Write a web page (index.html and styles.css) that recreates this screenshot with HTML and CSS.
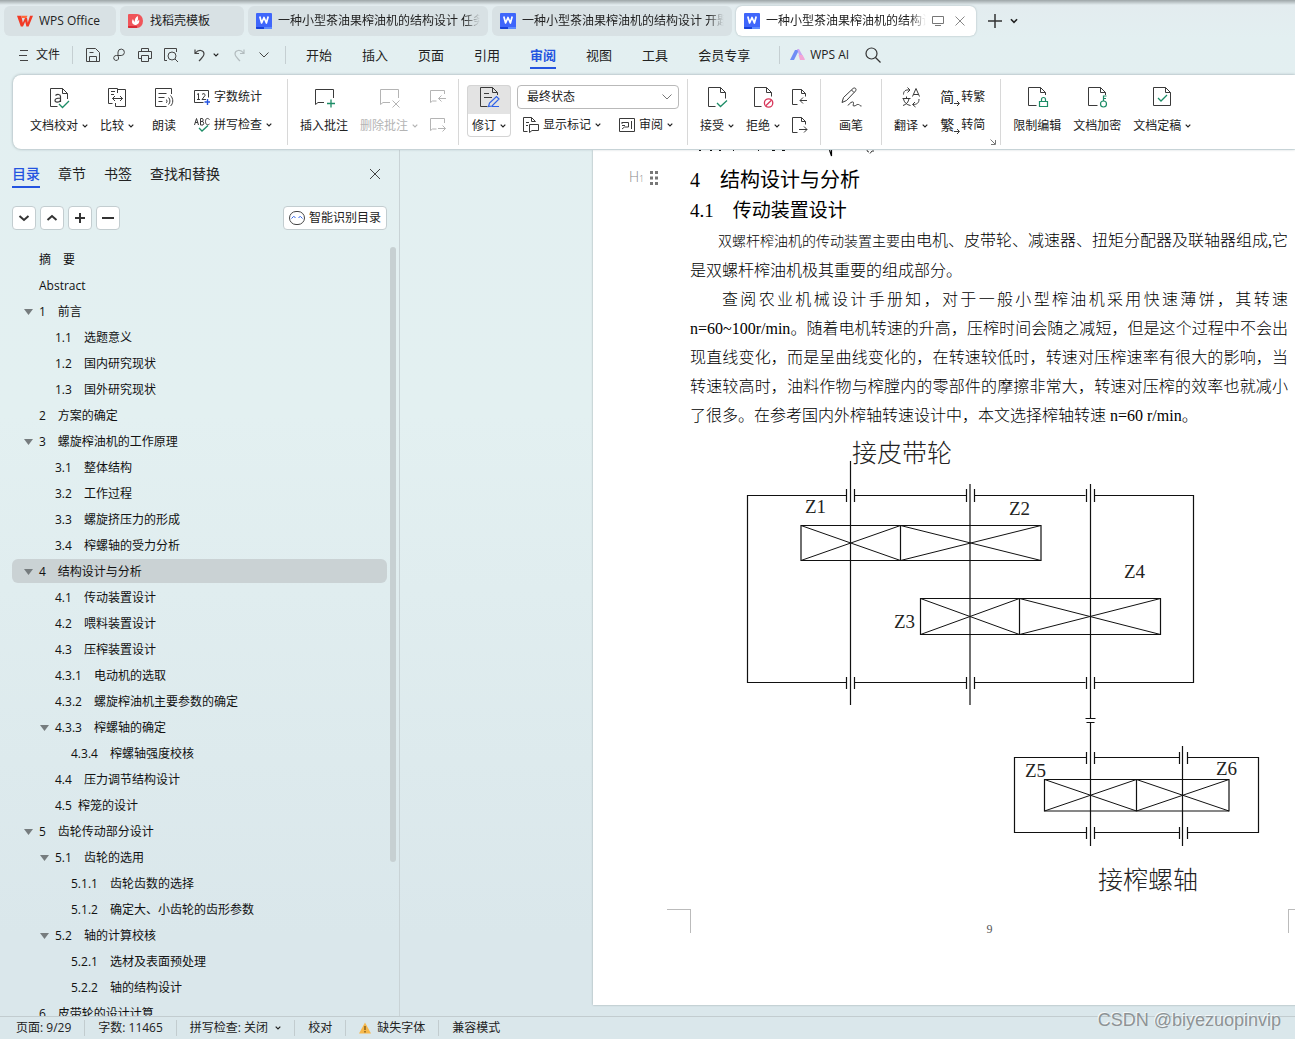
FILE: index.html
```html
<!DOCTYPE html>
<html lang="zh-CN">
<head>
<meta charset="utf-8">
<meta name="viewport" content="width=device-width, initial-scale=1">
<title>WPS Office</title>
<link rel="stylesheet" href="styles.css">
</head>
<body>
<svg class="defs" width="0" height="0" aria-hidden="true">
  <symbol id="chev" viewBox="0 0 6 6"><path d="M.7 1.7 3 4 5.3 1.7" fill="none" stroke="currentColor" stroke-width="1.2"/></symbol>
  <symbol id="word" viewBox="0 0 16 16"><path d="M1 0h14a1 1 0 0 1 1 1v14a1 1 0 0 1-1 1H1a1 1 0 0 1-1-1V1a1 1 0 0 1 1-1z" fill="#3f66fb"/><path d="M0 14h8v2H1a1 1 0 0 1-1-1z" fill="#1741d8"/><path d="M8 14h8v1a1 1 0 0 1-1 1H8z" fill="#5e8bff"/><path d="M3.8 3.5 5.6 10 8 4.5l2.4 5.500L12.200 3.500" fill="none" stroke="#fff" stroke-width="1.7" stroke-linejoin="round"/></symbol>
</svg>

<div class="app">
  <header class="tabs">
    <button class="tab tab-home" type="button">
      <svg width="16" height="12" viewBox="0 0 16 12"><path d="M0 .8h4.300l1.500 7L8 3h2l.8 4.800L13 .8h3L11.600 11.500H9.400L8.200 6.500 6 11.500H3.800z" fill="#f23a26"/><path d="M4.300.8h6.200l-1 2.200H5z" fill="#ff6a3c"/></svg>
      <span class="tab-text">WPS Office</span>
    </button>
    <button class="tab tab-tpl" type="button">
      <svg width="16" height="16" viewBox="0 0 16 16"><path d="M1 1h8a6 7 0 0 1 0 14H1a1 1 0 0 1-1-1V2a1 1 0 0 1 1-1z" fill="#f0555a"/><path d="M0 13h9v2H1a1 1 0 0 1-1-1z" fill="#d92b35"/><path d="M7 12C3.500 11 3.500 8 5 6c.5 2 1.500 2 1.800 3.500C6.500 6.500 7.500 4 10 3c-.5 2 1 2.500-1 5.500C10 8 10.500 7.500 11 6.500 12 9.500 10 12 7 12z" fill="#fff"/></svg>
      <span class="tab-text">找稻壳模板</span>
    </button>
    <button class="tab tab-doc" type="button"><svg width="16" height="16"><use href="#word"/></svg><span class="tab-text fade">一种小型茶油果榨油机的结构设计 任务书</span></button>
    <button class="tab tab-doc" type="button"><svg width="16" height="16"><use href="#word"/></svg><span class="tab-text fade">一种小型茶油果榨油机的结构设计 开题报告</span></button>
    <div class="tab tab-doc active">
      <svg width="16" height="16"><use href="#word"/></svg><span class="tab-text fade">一种小型茶油果榨油机的结构设计</span>
      <svg width="12" height="12" viewBox="0 0 12 12" fill="none" stroke="#777"><path d="M.5 1.500h11v7H.5zM3 10.500h6"/></svg>
      <button class="plain close" type="button" aria-label="关闭标签"><svg width="10" height="10" viewBox="0 0 10 10" fill="none" stroke="#888"><path d="m.5.5 9 9m0-9-9 9"/></svg></button>
    </div>
    <div class="tab-tools">
      <button class="plain" type="button" aria-label="新建"><svg width="14" height="14" viewBox="0 0 14 14" stroke="#333" stroke-width="1.500"><path d="M7 0v14M0 7h14"/></svg></button>
      <button class="plain" type="button" aria-label="标签列表"><svg width="8" height="8"><use href="#chev"/></svg></button>
    </div>
  </header>

  <nav class="menu" aria-label="菜单">
    <button class="plain file" type="button"><svg width="10" height="12" viewBox="0 0 10 12" stroke="#444"><path d="M1 1.500h8M0 6.500h8M1 11.500h8"/></svg>文件</button>
    <span class="bar"></span>
    <div class="quick">
      <button class="plain" type="button" aria-label="保存"><svg width="16" height="16" viewBox="0 0 16 16" fill="none" stroke="#444"><path d="M1.500 1.500h9l4 4v9h-13zM4.500 14v-4.500h7V14M4.500 5.500h4"/></svg></button>
      <button class="plain" type="button" aria-label="输出为PDF"><svg width="16" height="16" viewBox="0 0 16 16" fill="none" stroke="#444"><path d="M7 9.500V5a3.200 3.200 0 1 1 3.200 3.500H5.500A2.500 2.500 0 1 0 7.500 12V9.500"/></svg></button>
      <button class="plain" type="button" aria-label="打印"><svg width="16" height="16" viewBox="0 0 16 16" fill="none" stroke="#444"><path d="M4.500 4.500v-3h7v3M4 11.500H1.500v-7h13v7H12M4.500 8.500h7v6h-7z"/></svg></button>
      <button class="plain" type="button" aria-label="打印预览"><svg width="16" height="16" viewBox="0 0 16 16" fill="none" stroke="#444"><path d="M4 13.500H1.500v-12h12V5"/><circle cx="9" cy="9" r="4"/><path d="m12 12 3 3"/></svg></button>
      <button class="plain undo" type="button" aria-label="撤销"><svg width="14" height="14" viewBox="0 0 14 14" fill="none" stroke="#444" stroke-width="1.200"><path d="M2 1.500v4h4M2.500 5C5.500 1 11 2 11 6c0 2.500-2 3.500-5 7"/></svg><svg width="6" height="6"><use href="#chev"/></svg></button>
      <button class="plain" type="button" aria-label="恢复"><svg width="14" height="14" viewBox="0 0 14 14" fill="none" stroke="#b3bcbf" stroke-width="1.200"><path d="M12 1.500v4H8M11.500 5C8.500 1 3 2 3 6c0 2.500 2 3.500 5 7"/></svg></button>
      <button class="plain" type="button" aria-label="更多"><svg width="10" height="6" viewBox="0 0 10 6" fill="none" stroke="#444"><path d="m.5.5 4.500 4.500L9.500.5"/></svg></button>
    </div>
    <span class="bar"></span>
    <div class="menu-items">
      <a href="#start">开始</a><a href="#insert">插入</a><a href="#page">页面</a><a href="#ref">引用</a><a href="#review" class="on" aria-current="page">审阅</a><a href="#view">视图</a><a href="#tools">工具</a><a href="#member">会员专享</a>
    </div>
    <span class="bar"></span>
    <button class="plain ai" type="button"><svg width="16" height="12" viewBox="0 0 16 12"><path d="M5 1h4L4 11H0z" fill="#6f8df5"/><path d="M7 0h2l5.500 10h-4z" fill="#c9a5f0"/><path d="m8.500 6 4 0 2.500 5h-5z" fill="#f3a6d6"/></svg>WPS AI</button>
    <button class="plain" type="button" aria-label="搜索"><svg width="16" height="16" viewBox="0 0 16 16" fill="none" stroke="#333" stroke-width="1.200"><circle cx="6.500" cy="6.500" r="5.500"/><path d="m10.500 10.500 5 5"/></svg></button>
  </nav>

  <section class="ribbon" aria-label="审阅">
    <div class="group roomy">
      <button class="tall" type="button"><span class="ico"><svg width="24" height="24" viewBox="0 0 24 24" fill="none"><path d="M10.500 21.500h-7v-18h12l5 5V14M15.500 3.500v5h5" stroke="#3a3a3a"/><path d="M8.500 10.500c1.500-1.500 5-1.500 5 1v5.500M13.500 13c-3 0-5.500.5-5.500 2.500s4 2.300 5.500 0" stroke="#3a3a3a" stroke-width="1.200"/><path d="m12 19 3.500 3.500L22 16" stroke="#1c8c66" stroke-width="1.300"/></svg></span><span class="lab">文档校对<svg class="dd"><use href="#chev"/></svg></span></button>
      <button class="tall" type="button"><span class="ico"><svg width="24" height="24" viewBox="0 0 24 24" fill="none" stroke="#3a3a3a"><path d="M12.500 8V3.500h-9v15h4M12.500 4.500h8v17h-10V18M6 6.500h4M6 9.500h3M7.500 13.500h10M10 11l-2.500 2.500L10 16M15 11l2.500 2.500L15 16"/></svg></span><span class="lab">比较<svg class="dd"><use href="#chev"/></svg></span></button>
      <button class="tall solo" type="button"><span class="ico"><svg width="24" height="24" viewBox="0 0 24 24" fill="none" stroke="#3a3a3a"><path d="M19.500 9V3.500h-16v18h11M6.500 8.500h8M6.500 12.500h6M6.500 16.500h4M14 14.500a2 2 0 0 1 0 3.500M16.500 12.500a5 5 0 0 1 0 7M18.500 10.500c3 3 3 8 0 10.500"/></svg></span><span class="lab">朗读</span></button>
      <div class="rows">
        <button class="row" type="button"><svg width="16" height="16" viewBox="0 0 16 16" fill="none"><path d="M9.500 13.500h-9v-12h14v7" stroke="#3a3a3a"/><path d="M3 5.500 4.500 4.500v6M3 10.500h3M8 5.500c1-1.500 3.500-1 3 1L8 10.500h4" stroke="#3a3a3a"/><path d="M13.500 10v6M10.500 13h6" stroke="#2454e0" stroke-width="1.400"/></svg>字数统计</button>
        <button class="row" type="button"><svg width="16" height="16" viewBox="0 0 16 16" fill="none" stroke="#3a3a3a"><path d="m.5 8 2-6.500 2 6.500M1 5.500h3M6.500 8V1.500h2q1.500 1.500 0 3h-2 2.500q1.500 2 0 3.500zM15.500 2.500c-3-2.500-4 0-4 2s1 4.500 4 2.500"/><path d="m5 11 3 3 6-5.500" stroke="#1c8c66" stroke-width="1.300"/></svg>拼写检查<svg class="dd"><use href="#chev"/></svg></button>
      </div>
    </div>

    <div class="group">
      <button class="tall" type="button"><span class="ico"><svg width="24" height="24" viewBox="0 0 24 24" fill="none"><path d="M21.500 13V4.500h-18v15L6 17.500h6" stroke="#3a3a3a"/><path d="M19 14.500v8M15 18.500h8" stroke="#1c8c66" stroke-width="1.300"/></svg></span><span class="lab">插入批注</span></button>
      <button class="tall" type="button" disabled><span class="ico"><svg width="24" height="24" viewBox="0 0 24 24" fill="none" stroke="#b4b4b4"><path d="M21.500 13V4.500h-18v15L6 17.500h7M15.500 15.500l7 7m0-7-7 7"/></svg></span><span class="lab">删除批注<svg class="dd"><use href="#chev"/></svg></span></button>
      <div class="rows">
        <button class="row" type="button" disabled aria-label="上一条批注"><svg width="16" height="16" viewBox="0 0 16 16" fill="none" stroke="#b4b4b4"><path d="M14.500 5V1.500H.5v12l2-1.500h4M16 9.500H8.500M11.500 6.500l-3 3 3 3"/></svg></button>
        <button class="row" type="button" disabled aria-label="下一条批注"><svg width="16" height="16" viewBox="0 0 16 16" fill="none" stroke="#b4b4b4"><path d="M14.500 6V1.500H.5v12l2-1.500h4M8 11.500h7.500M12.500 8.500l3 3-3 3"/></svg></button>
      </div>
    </div>

    <div class="group tight">
      <button class="tall pressed" type="button" aria-pressed="true"><span class="ico"><svg width="24" height="24" viewBox="0 0 24 24" fill="none"><path d="M10.500 21.500h-7v-19h12l5 5V10M15.500 2.500v5h5M7 8.500h5M7 12.500h8" stroke="#3a3a3a"/><path d="m11.500 21.500 1-3.500 7-6.500 2.500 2.500-7 7zM15 21.500h7" stroke="#2f62e8" stroke-width="1.200"/></svg></span><span class="lab">修订<svg class="dd"><use href="#chev"/></svg></span></button>
      <div class="rows">
        <label class="pick"><select aria-label="显示状态"><option>最终状态</option></select><svg width="10" height="6" viewBox="0 0 10 6" fill="none" stroke="#777"><path d="m.5.5 4.500 4.500L9.500.5"/></svg></label>
        <div class="pair">
          <button class="row" type="button"><svg width="16" height="16" viewBox="0 0 16 16" fill="none" stroke="#3a3a3a"><path d="M4.500 14.500h-4V.5h8l4 4M8.500.5v4h4M3 5.500h3M3 8.500h2M6.500 15.500v-8h9v6H9z"/></svg>显示标记<svg class="dd"><use href="#chev"/></svg></button>
          <button class="row" type="button"><svg width="16" height="16" viewBox="0 0 16 16" fill="none" stroke="#3a3a3a"><path d="M.5 1.500h15v13H.5zM12.500 4v8M3 5.500h6.500v4.500H5.500L3 12M3 5v2M3 8.500h3"/></svg>审阅<svg class="dd"><use href="#chev"/></svg></button>
        </div>
      </div>
    </div>

    <div class="group">
      <button class="tall" type="button"><span class="ico"><svg width="24" height="24" viewBox="0 0 24 24" fill="none"><path d="M10.500 21.500h-7v-19h12l5 5v6M15.500 2.500v5h5" stroke="#3a3a3a"/><path d="m12 18 3.500 3.500 6.500-6" stroke="#1c8c66" stroke-width="1.300"/></svg></span><span class="lab">接受<svg class="dd"><use href="#chev"/></svg></span></button>
      <button class="tall" type="button"><span class="ico"><svg width="24" height="24" viewBox="0 0 24 24" fill="none"><path d="M10.500 21.500h-7v-19h12l5 5v4M15.500 2.500v5h5" stroke="#3a3a3a"/><path d="M14.800 20.800l5.600-5.600" stroke="#d8365a" stroke-width="1.300"/><circle cx="17.600" cy="18" r="4.200" stroke="#d8365a" stroke-width="1.300"/></svg></span><span class="lab">拒绝<svg class="dd"><use href="#chev"/></svg></span></button>
      <div class="rows">
        <button class="row" type="button" aria-label="上一条修订"><svg width="16" height="16" viewBox="0 0 16 16" fill="none" stroke="#3a3a3a"><path d="M5.500 15.500h-5V.5h9l4 4v3M9.500.5v4h4M15 11.500H8M11 8.500l-3 3 3 3"/></svg></button>
        <button class="row" type="button" aria-label="下一条修订"><svg width="16" height="16" viewBox="0 0 16 16" fill="none" stroke="#3a3a3a"><path d="M5.500 15.500h-5V.5h9l4 4v3M9.500.5v4h4M7 12.500h8M12 9.500l3 3-3 3"/></svg></button>
      </div>
    </div>

    <div class="group">
      <button class="tall solo" type="button"><span class="ico"><svg width="24" height="24" viewBox="0 0 24 24" fill="none" stroke="#3a3a3a"><path d="M3 17.500 4.500 12.500 14 3.500c2-1.500 4 .5 2.500 2.500L7.500 15.500zM12.500 5l2.500 2.500M9 20.500c2-3 5-4.500 5.500-3s-1.500 3.500.5 3.500 2.500-2 4.500-1.500 1 1.500 3 1.500"/></svg></span><span class="lab">画笔</span></button>
    </div>

    <div class="group roomy">
      <button class="tall" type="button"><span class="ico"><svg width="24" height="24" viewBox="0 0 24 24" fill="none" stroke="#3a3a3a"><path d="m13.500 11.500 3.500-8 3.500 8M14.500 9.500h5M4.500 9.500C4.500 6 6.500 4.500 10.500 5M8.500 2.500l2.500 2.500L8.500 7.500M3.500 13.500h8M7.500 11.500v2M4 20.500c3.500-1 5.500-3.500 6-7M4.500 14c.5 3 3 6 7 6.500M20 14c0 4-2 5.500-6 5.500M16 17 13.500 19.500l3 2.500"/></svg></span><span class="lab">翻译<svg class="dd"><use href="#chev"/></svg></span></button>
      <div class="rows">
        <button class="row" type="button"><span class="glyph">简<svg width="6" height="6" viewBox="0 0 6 6" fill="none" stroke="#3a3a3a"><path d="M0 3.500h5M3 1l2.500 2.500L3 6"/></svg></span>转繁</button>
        <button class="row" type="button"><span class="glyph">繁<svg width="6" height="6" viewBox="0 0 6 6" fill="none" stroke="#3a3a3a"><path d="M0 3.500h5M3 1l2.500 2.500L3 6"/></svg></span>转简</button>
      </div>
      <svg class="corner" width="6" height="6" viewBox="0 0 6 6" fill="none" stroke="#777"><path d="m.5.5 4.500 4.500M5.500 1v4.500H1"/></svg>
    </div>

    <div class="group last">
      <button class="tall" type="button"><span class="ico"><svg width="24" height="24" viewBox="0 0 24 24" fill="none"><path d="M11.500 20.500h-8v-18h12l5 5V10M15.500 2.500v5h5" stroke="#3a3a3a"/><path d="M14.500 16.500h8v5h-8zM16.500 16v-1.500a2 2 0 0 1 4 0V16" stroke="#1c8c66" stroke-width="1.200"/></svg></span><span class="lab">限制编辑</span></button>
      <button class="tall" type="button"><span class="ico"><svg width="24" height="24" viewBox="0 0 24 24" fill="none"><path d="M12.500 20.500h-9v-18h12l5 5V10M15.500 2.500v5h5" stroke="#3a3a3a"/><path d="M18.500 16v-5h3M18.500 13.500h2.500" stroke="#1c8c66" stroke-width="1.200"/><circle cx="18.500" cy="19" r="3" stroke="#1c8c66" stroke-width="1.200"/></svg></span><span class="lab">文档加密</span></button>
      <button class="tall" type="button"><span class="ico"><svg width="24" height="24" viewBox="0 0 24 24" fill="none"><path d="M3.500 2.500h12l5 5v13h-17zM15.500 2.500v5h5" stroke="#3a3a3a"/><path d="m8 13 3 3 6-6" stroke="#1c8c66" stroke-width="1.300"/></svg></span><span class="lab">文档定稿<svg class="dd"><use href="#chev"/></svg></span></button>
    </div>
  </section>

  <main class="work">
    <aside class="side">
      <div class="side-tabs">
        <a href="#toc" class="on">目录</a><a href="#chapter">章节</a><a href="#bookmark">书签</a><a href="#find">查找和替换</a>
        <button class="plain shut" type="button" aria-label="关闭窗格"><svg width="12" height="12" viewBox="0 0 12 12" fill="none" stroke="#444"><path d="m1 1 10 10M11 1 1 11"/></svg></button>
      </div>
      <div class="side-tools">
        <button class="box" type="button" aria-label="展开"><svg width="12" height="12" viewBox="0 0 12 12"><path d="m1.500 4 4.500 4 4.500-4"/></svg></button>
        <button class="box" type="button" aria-label="收起"><svg width="12" height="12" viewBox="0 0 12 12"><path d="m1.500 8 4.500-4 4.500 4"/></svg></button>
        <button class="box" type="button" aria-label="提升"><svg width="12" height="12" viewBox="0 0 12 12"><path d="M1 6h10M6 1v10"/></svg></button>
        <button class="box" type="button" aria-label="降低"><svg width="12" height="12" viewBox="0 0 12 12"><path d="M0 6h12"/></svg></button>
        <button class="box smart" type="button"><svg class="face" width="16" height="14" viewBox="0 0 16 14"><rect x=".5" y=".5" width="15" height="13" rx="6.500" stroke="#444"/><path d="m2.500 7.500 2-2 2 1M9.500 6.500l2-1 2 2" stroke="#2f62e8"/></svg>智能识别目录</button>
      </div>
      <div class="toc-wrap">
        <ul class="toc">
          <li class="l0"><a href="#t">摘　要</a></li>
          <li class="l0"><a href="#t">Abstract</a></li>
          <li class="l0 open"><a href="#t">1　前言</a></li>
          <li class="l1"><a href="#t">1.1　选题意义</a></li>
          <li class="l1"><a href="#t">1.2　国内研究现状</a></li>
          <li class="l1"><a href="#t">1.3　国外研究现状</a></li>
          <li class="l0"><a href="#t">2　方案的确定</a></li>
          <li class="l0 open"><a href="#t">3　螺旋榨油机的工作原理</a></li>
          <li class="l1"><a href="#t">3.1　整体结构</a></li>
          <li class="l1"><a href="#t">3.2　工作过程</a></li>
          <li class="l1"><a href="#t">3.3　螺旋挤压力的形成</a></li>
          <li class="l1"><a href="#t">3.4　榨螺轴的受力分析</a></li>
          <li class="l0 open current"><a href="#t">4　结构设计与分析</a></li>
          <li class="l1"><a href="#t">4.1　传动装置设计</a></li>
          <li class="l1"><a href="#t">4.2　喂料装置设计</a></li>
          <li class="l1"><a href="#t">4.3　压榨装置设计</a></li>
          <li class="l1"><a href="#t">4.3.1　电动机的选取</a></li>
          <li class="l1"><a href="#t">4.3.2　螺旋榨油机主要参数的确定</a></li>
          <li class="l1 open"><a href="#t">4.3.3　榨螺轴的确定</a></li>
          <li class="l2"><a href="#t">4.3.4　榨螺轴强度校核</a></li>
          <li class="l1"><a href="#t">4.4　压力调节结构设计</a></li>
          <li class="l1"><a href="#t">4.5&nbsp; 榨笼的设计</a></li>
          <li class="l0 open"><a href="#t">5　齿轮传动部分设计</a></li>
          <li class="l1 open"><a href="#t">5.1　齿轮的选用</a></li>
          <li class="l2"><a href="#t">5.1.1　齿轮齿数的选择</a></li>
          <li class="l2"><a href="#t">5.1.2　确定大、小齿轮的齿形参数</a></li>
          <li class="l1 open"><a href="#t">5.2　轴的计算校核</a></li>
          <li class="l2"><a href="#t">5.2.1　选材及表面预处理</a></li>
          <li class="l2"><a href="#t">5.2.2　轴的结构设计</a></li>
          <li class="l0"><a href="#t">6　皮带轮的设计计算</a></li>
        </ul>
        <div class="track"><div class="thumb"></div></div>
      </div>
    </aside>

    <div class="canvas">
      <article class="page">
        <svg class="cut" width="600" height="10" viewBox="690 150 600 10" fill="none" stroke="#000"><path d="M699 150.500h2M710 150.500h2M719 150.500h2M733 150.500h1M758 150.500h1M772 150.500h3M782 150.500h3"/><path d="m829.500 150 2 6V150" stroke-width="1.200"/><path d="M867 150q0 2 2 2M870 153.500l2-2.500h2" stroke="#333"/></svg>
        <div class="title-row">
          <span class="mark">H<small>1</small><svg width="8" height="14" viewBox="0 0 8 14" fill="#777"><path d="M0 0h3v3H0zM5 0h3v3H5zM0 5.500h3v3H0zM5 5.500h3v3H5zM0 11h3v3H0zM5 11h3v3H5z"/></svg></span>
          <h1>4　结构设计与分析</h1>
        </div>
        <h2>4.1　传动装置设计</h2>
        <p><span class="line full in1"><span class="small">双螺杆榨油机的传动装置主要</span>由电机、皮带轮、减速器、扭矩分配器及联轴器组成,它</span><span class="line">是双螺杆榨油机极其重要的组成部分。</span></p>
        <p><span class="line full in2">查阅农业机械设计手册知，对于一般小型榨油机采用快速薄饼，其转速</span><span class="line full">n=60~100r/min。随着电机转速的升高，压榨时间会随之减短，但是这个过程中不会出</span><span class="line full">现直线变化，而是呈曲线变化的，在转速较低时，转速对压榨速率有很大的影响，当</span><span class="line full">转速较高时，油料作物与榨膛内的零部件的摩擦非常大，转速对压榨的效率也就减小</span><span class="line">了很多。在参考国内外榨轴转速设计中，本文选择榨轴转速 n=60 r/min。</span></p>
        <svg class="figure" width="600" height="464" viewBox="690 434 600 464" role="img" aria-label="传动装置简图">
          <g fill="none" stroke="#111" stroke-width="1.200">
            <path d="M846 495.500h-98.500v187H846M854.500 495.500H966M975 495.500h110.500M1094.500 495.500h99v187h-99M854.500 682.500H966M975 682.500h110.500"/>
            <path d="M846.500 489v13M854.500 489v13M966.500 489v13M974.500 489v13M1086.500 489v13M1094.500 489v13M846.500 677v12M854.500 677v12M966.500 677v12M974.500 677v12M1086.500 677v12M1094.500 677v12"/>
            <path d="M850.500 461v244M970 484v221M1090.500 484v234M1085.500 718.500h10M1086.500 722.500h8M1090.500 723v123M1182.500 746v100"/>
            <path d="M801 525.500h240v35H801zM900.500 525.500v35M920.500 598.500h240v36h-240zM1019.500 598.500v36"/>
            <path d="m801 525.500 99.500 35M801 560.500l99.500-35M900.500 525.500l140.500 35M900.500 560.500l140.500-35M920.500 598.500l99 36M920.500 634.500l99-36M1019.500 598.500l141 36M1019.500 634.500l141-36" stroke-width="1"/>
            <path d="M1086 757.500h-71.500v75h71.500M1094.500 757.500h84.500M1187.500 757.500h71v75h-71M1094.500 832.500h84.500"/>
            <path d="M1086.500 752v12M1094.500 752v12M1179.500 752v12M1187.500 752v12M1086.500 827v12M1094.500 827v12M1179.500 827v12M1187.500 827v12"/>
            <path d="M1044.500 779.500h184.500v31.500h-184.500zM1136.500 779.500V811"/>
            <path d="m1044.500 779.500 92 31.500M1044.500 811l92-31.500M1136.500 779.500 1229 811M1136.500 811l92.500-31.500" stroke-width="1"/>
          </g>
          <g class="zh"><text x="852" y="462">接皮带轮</text><text x="1098" y="889">接榨螺轴</text></g>
          <g class="z"><text x="805" y="513">Z1</text><text x="1009" y="515">Z2</text><text x="894" y="628">Z3</text><text x="1124" y="578">Z4</text><text x="1025" y="777">Z5</text><text x="1216" y="775">Z6</text></g>
        </svg>
        <footer class="foot"><span class="crop left"></span><span class="num">9</span><span class="crop right"></span></footer>
      </article>
    </div>
  </main>

  <footer class="status">
    <span>页面: 9/29</span><span>字数: 11465</span><span>拼写检查: 关闭<svg class="dd"><use href="#chev"/></svg></span><span>校对</span><span><svg class="warn" width="12" height="12" viewBox="0 0 12 12"><path d="M6 .5 12 11.500H0z" fill="#f7b84b"/><path d="M6 4v4M6 9v1.500" stroke="#6b4a10" stroke-width="1.200"/></svg>缺失字体</span><span>兼容模式</span>
  </footer>
  <div class="watermark">CSDN @biyezuopinvip</div>
</div>
</body>
</html>
```

FILE: styles.css
```css
* { box-sizing: border-box; }

body {
  margin: 0;
  font: 12px/16px "Open Sans", "Noto Sans CJK SC", sans-serif;
  color: #222;
}

svg { flex: none; display: block; }
.defs { position: absolute; }
a { color: inherit; text-decoration: none; }

button {
  font: inherit;
  color: inherit;
  padding: 0;
  border: 0;
  background: none;
}

button:disabled { color: #b4b4b4; }

.plain { display: flex; align-items: center; }
.dd { width: 6px; height: 6px; margin-left: 4px; }

.app {
  position: relative;
  display: flex;
  flex-direction: column;
  height: 100vh;
  overflow: hidden;
  background: linear-gradient(#e3eff1, #e3f0f1 40%, #dae7eb 90%);
}

/* document tabs */
.tabs {
  display: flex;
  gap: 4px;
  height: 38px;
  padding: 6px 4px 2px;
  background: linear-gradient(#9da5a7, #e3ecef 5px, #e3eff1);
}

.tab {
  display: flex;
  align-items: center;
  gap: 6px;
  height: 30px;
  padding: 0 8px;
  border-radius: 6px;
  background: #d8e1e4;
  text-align: left;
}

.tab-home { width: 112px; padding-left: 13px; }
.tab-tpl { width: 124px; }
.tab-doc { width: 240px; }
.tab-text { white-space: nowrap; overflow: hidden; }
.tab-doc .tab-text { flex: 1; }
.fade { mask-image: linear-gradient(to left, transparent, #000 16px); }
.active { background: #fff; box-shadow: 0 0 2px #9fb0b3; }
.close { margin: 0 3px 0 5px; }
.tab-tools { display: flex; gap: 8px; padding-left: 8px; }

/* menu */
.menu {
  display: flex;
  align-items: center;
  height: 37px;
  padding: 0 19px 3px;
}

.file { gap: 7px; }
.bar { width: 1px; height: 18px; margin: 0 12px; background: #c5cfd2; }
.quick { display: flex; align-items: center; gap: 10px; }
.undo { gap: 6px; margin-left: 4px; }
.quick > :nth-child(n+6) { margin-left: 3px; }
.quick + .bar { margin: 0 20px 0 16px; }
.menu-items { display: flex; gap: 30px; font-size: 13px; line-height: 20px; }
.menu-items a { padding: 3px 0 2px; border-bottom: 2px solid transparent; }
.menu-items .on { color: #2454e0; font-weight: 700; border-color: #2454e0; }
.menu-items + .bar { margin: 0 10px 0 29px; }
.ai { gap: 4px; margin-right: 16px; }

/* ribbon */
.ribbon {
  position: relative;
  z-index: 1;
  display: flex;
  height: 74px;
  margin: 0 0 1px 13px;
  padding: 4px 0 4px 5px;
  border-radius: 8px 0 0 8px;
  background: #fff;
  box-shadow: 0 0 3px #93a3a6;
}

.group {
  position: relative;
  display: flex;
  gap: 12px;
  padding: 6px 12px;
  border-right: 1px solid #d8d8d8;
}

.roomy { padding-right: 15px; }
.tight { gap: 6px; padding: 6px 8px; }
.last { border: 0; }

.tall {
  display: flex;
  flex-direction: column;
  align-items: center;
  gap: 4px;
  height: 52px;
}

.solo { width: 36px; }
.ico { display: flex; height: 24px; }
.lab, .row { display: flex; align-items: center; height: 24px; white-space: nowrap; }
.lab { padding-top: 2px; }
.rows { display: flex; flex-direction: column; gap: 4px; }
.row svg:first-child { margin-right: 4px; }
.row[aria-label] svg { margin: 0; }

.pressed {
  width: 44px;
  border-radius: 4px;
  background: linear-gradient(#e3e3e3 29px, #fff 29px);
  box-shadow: inset 0 0 0 1px #d4d4d4;
}

.pick {
  display: flex;
  align-items: center;
  width: 162px;
  height: 24px;
  padding: 0 6px 0 9px;
  border: 1px solid #b9b9b9;
  border-radius: 4px;
}

.pick select {
  appearance: none;
  flex: 1;
  padding: 0;
  border: 0;
  background: none;
  font: inherit;
  color: inherit;
}

.pair { display: flex; justify-content: space-between; padding: 0 6px; }
.glyph { display: flex; align-items: flex-end; width: 21px; font-size: 14px; line-height: 18px; }
.corner { position: absolute; right: 4px; bottom: 0; }

/* outline pane */
.work { display: flex; flex: 1; min-height: 0; }

.side {
  display: flex;
  flex-direction: column;
  width: 400px;
  border-right: 1px solid #c9d3d6;
}

.side-tabs {
  display: flex;
  align-items: flex-start;
  gap: 18px;
  height: 56px;
  padding: 14px 18px 0 12px;
  font-size: 14px;
  line-height: 20px;
}

.side-tabs .on { color: #2454e0; font-weight: 500; border-bottom: 2px solid #2454e0; height: 24px; }
.shut { height: 20px; margin-left: auto; }
.side-tools { display: flex; gap: 4px; padding: 0 12px; }

.box {
  display: flex;
  align-items: center;
  justify-content: center;
  gap: 4px;
  width: 24px;
  height: 24px;
  border: 1px solid #c3cdd0;
  border-radius: 4px;
  background: #fff;
}

.box svg { fill: none; stroke: #333; stroke-width: 2; }
.box .face { stroke-width: 1; }
.smart { width: 104px; margin-left: auto; white-space: nowrap; }

.toc-wrap { display: flex; flex: 1; min-height: 0; margin-top: 16px; padding-left: 12px; }
.toc { flex: 1; margin: 0; padding: 0; list-style: none; overflow: hidden; color: #111; }
.toc li { display: flex; align-items: center; height: 24px; margin: 1px 0 2px; padding-top: 2px; border-radius: 6px; }
.toc li::before { content: ""; width: 9px; height: 6px; margin-right: 6px; }
.toc .open::before { background: #767c7e; clip-path: polygon(0 0, 100% 0, 50% 100%); }
.toc .l0 { padding-left: 12px; }
.toc .l1 { padding-left: 28px; }
.toc .l2 { padding-left: 44px; }
.toc .current { background: #cad2d4; }
.track { width: 12px; padding: 1px 3px 0; }
.thumb { width: 6px; height: 80%; border-radius: 3px; background: #c7d0d2; }

/* document */
.canvas { flex: 1; min-width: 0; padding-left: 193px; overflow: hidden; }

.page {
  width: 794px;
  padding: 0 99px 72px 97px;
  background: #fff;
  box-shadow: 0 0 2px #9aa6a9;
  color: #000;
  font: 16px/29px "Liberation Serif", "Noto Sans CJK SC", serif;
}

.cut { margin-bottom: 5px; }
.title-row { position: relative; }

.mark {
  position: absolute;
  right: 100%;
  top: 4px;
  display: flex;
  align-items: baseline;
  width: 61px;
  font: 300 14px/16px "Open Sans", sans-serif;
  color: #888;
}

.mark small { font-size: 9px; }
.mark svg { margin-left: 6px; align-self: center; }
.page h1 { margin: 0; font-size: 20px; font-weight: 400; line-height: 30px; }
.page h2 { margin: 0; font-size: 19px; font-weight: 400; line-height: 31px; }
.page p { margin: 0; font-weight: 300; }
.line { display: block; white-space: nowrap; }
.full { text-align: justify; text-align-last: justify; white-space: normal; }
.in1 { padding-left: 28px; }
.in2 { padding-left: 32px; }
.small { font-size: 14px; }
.figure { margin-top: 4px; }
.zh { font: 300 25px "Noto Sans CJK SC", sans-serif; fill: #222; }
.z { font: 19px "Liberation Serif", serif; fill: #222; }

.foot {
  display: flex;
  justify-content: space-between;
  align-items: flex-end;
  height: 24px;
  margin: 11px -24px 0 -23px;
}

.crop { width: 24px; height: 24px; border-top: 1px solid #bbb; }
.left { border-right: 1px solid #bbb; }
.right { border-left: 1px solid #bbb; }
.num { font: 12px/8px "Liberation Serif", serif; color: #555; }

/* status bar */
.status {
  display: flex;
  align-items: center;
  height: 23px;
  padding-left: 3px;
  border-top: 1px solid #c2cccf;
  background: #dae7eb;
}

.status span { display: flex; align-items: center; padding: 0 13px; }
.status span + span { border-left: 1px solid #c2cccf; }
.status .dd { margin-left: 7px; }
.warn { margin-right: 6px; }

.watermark {
  position: absolute;
  right: 14px;
  bottom: 8px;
  font: 18px/22px "Liberation Sans", sans-serif;
  color: #8d9395;
  text-shadow: -1px -1px 0 #f4f8f9;
}
```
